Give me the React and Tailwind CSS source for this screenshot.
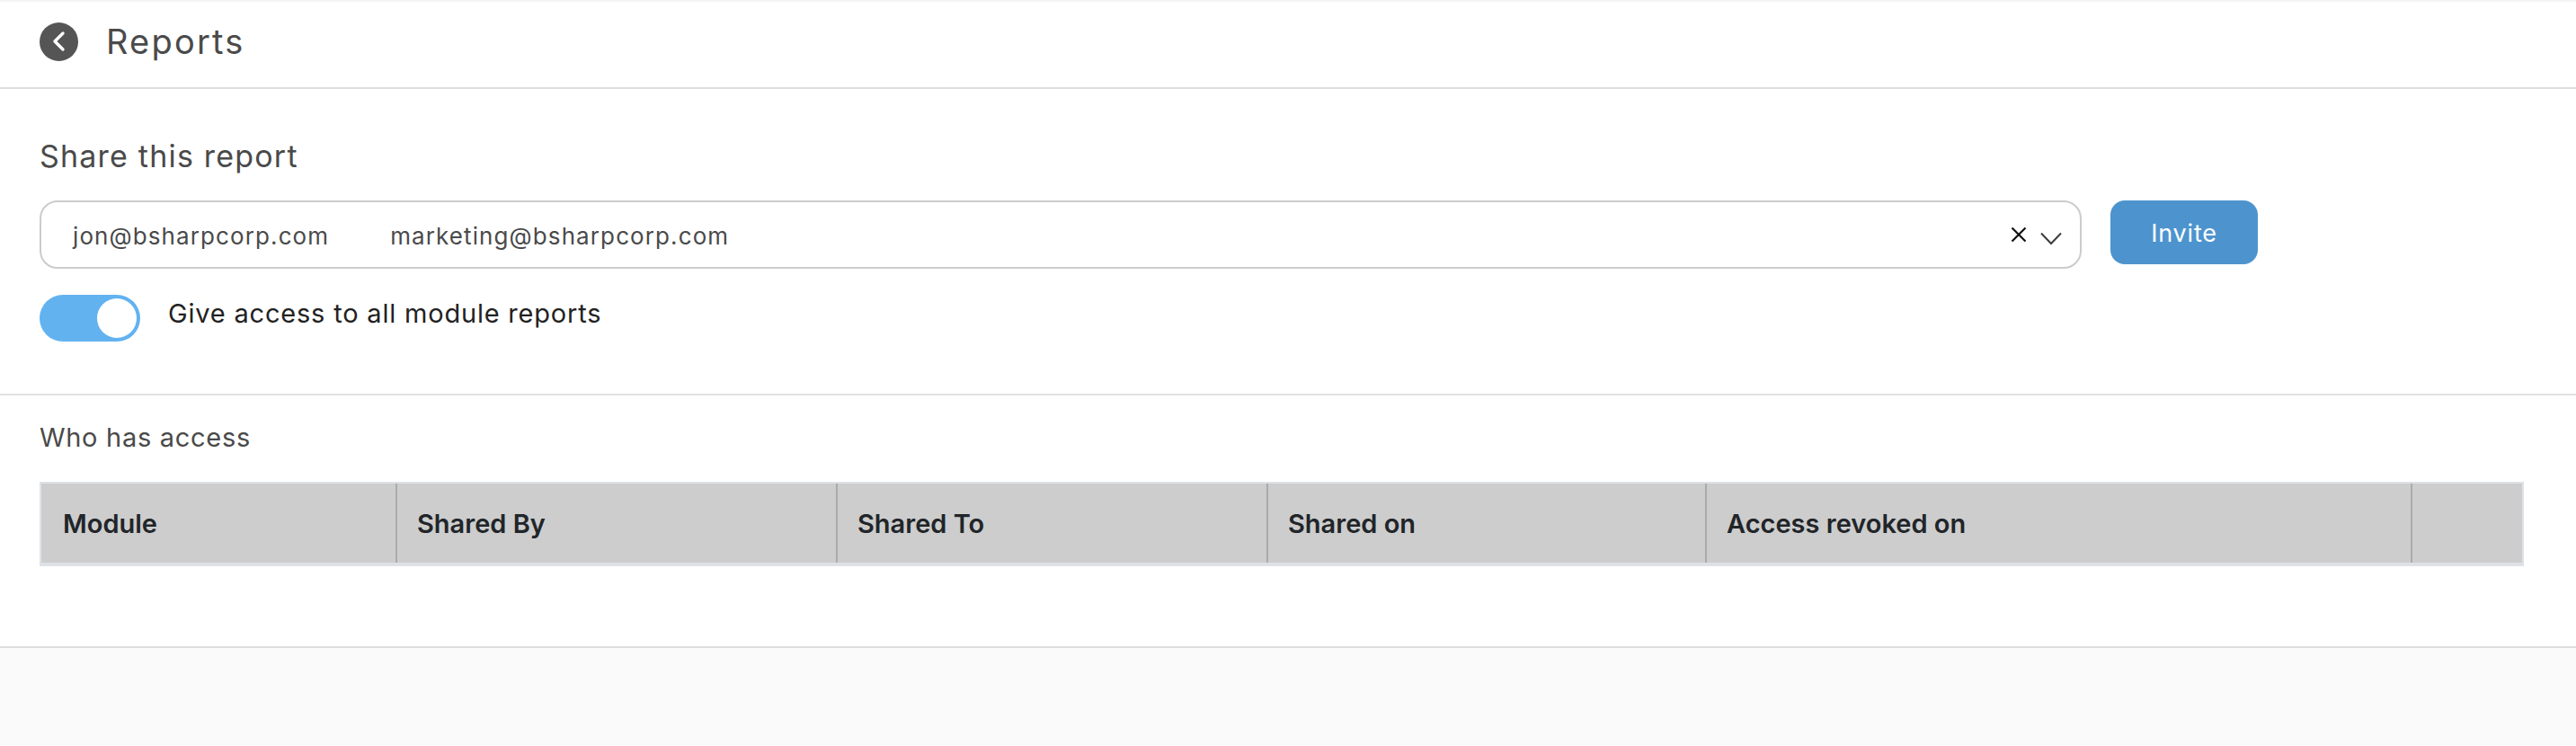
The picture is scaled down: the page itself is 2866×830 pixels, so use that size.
import React from 'react';

const columns = [
  { label: 'Module', width: 'w-[396px] pl-[24px]' },
  { label: 'Shared By', width: 'w-[490px] pl-[22px]' },
  { label: 'Shared To', width: 'w-[479px] pl-[22px]' },
  { label: 'Shared on', width: 'w-[488px] pl-[22px]' },
  { label: 'Access revoked on', width: 'w-[785px] pl-[22px]' },
  { label: '', width: 'flex-1' },
];

const emails = ['jon@bsharpcorp.com', 'marketing@bsharpcorp.com'];

const App = () => {
  return (
    <div className="h-[830px] flex flex-col bg-[#fafafa] font-['Inter','Liberation_Sans',sans-serif] overflow-hidden">
      <header className="h-[99px] shrink-0 bg-white border-t-2 border-t-[#f4f4f4] border-b-2 border-b-[#dedede] pl-[44px] flex items-center gap-[32px] pb-[7px]">
        <button className="w-[43px] h-[43px] rounded-full bg-[#555555] flex items-center justify-center">
          <svg width="22" height="26" viewBox="0 0 22 26" fill="none">
            <path d="M15 4L6 13L15 22" stroke="#fff" strokeWidth="3.4" strokeLinecap="round" strokeLinejoin="round" />
          </svg>
        </button>
        <h1 className="text-[38px] leading-none font-normal tracking-[2.2px] text-[#4a4a4a] -ml-[1px]">Reports</h1>
      </header>

      <section className="h-[341px] shrink-0 bg-white border-b-2 border-b-[#e0e0e0] px-[44px] pt-[55px]">
        <h2 className="text-[34px] leading-[40px] font-normal tracking-[1.2px] text-[#4a4a4a]">Share this report</h2>
        <div className="mt-[29px] flex items-start gap-[32px]">
          <div className="w-[2272px] h-[76px] rounded-[20px] border-2 border-[#cccccc] flex items-center pl-[35px] pr-[20px]">
            <div className="flex-1 flex items-center gap-[68px] text-[26px] tracking-[1.1px] text-[#4a4a4a] mt-[2px]">
              {emails.map((email) => (
                <span key={email}>{email}</span>
              ))}
            </div>
            <svg width="18" height="18" viewBox="0 0 18 18" fill="none" className="mr-[15px] -mt-[1px]">
              <path d="M1.5 1.5L16.5 16.5M16.5 1.5L1.5 16.5" stroke="#111111" strokeWidth="2.2" />
            </svg>
            <svg width="24" height="15" viewBox="0 0 24 15" fill="none" className="mt-[9px]">
              <path d="M1 1.5L12 13L23 1.5" stroke="#3c3c3c" strokeWidth="2" />
            </svg>
          </div>
          <button className="w-[164px] h-[71px] rounded-[16px] bg-[#4d94ce] text-white text-[27px] tracking-[0.8px] pt-[3px]">Invite</button>
        </div>
        <div className="mt-[29px] flex items-start gap-[32px]">
          <div className="w-[112px] h-[52px] rounded-full bg-[#62b2f0] flex items-center justify-end pr-[4px]">
            <span className="w-[44px] h-[44px] rounded-full bg-white" />
          </div>
          <span className="text-[29px] leading-[40px] tracking-[0.8px] text-[#222222] -ml-[1px] mt-[1px]">Give access to all module reports</span>
        </div>
      </section>

      <section className="h-[281px] shrink-0 bg-white border-b-2 border-b-[#dedede] px-[44px] pt-[29px]">
        <h3 className="text-[29px] leading-[36px] font-normal tracking-[0.7px] text-[#4a4a4a]">Who has access</h3>
        <div className="mt-[31px] w-[2764px] h-[94px] flex bg-[#cdcdcd] border-x-2 border-t-2 border-b-4 border-x-[#dee2e6] border-t-[#dee2e6] border-b-[#dee2e6]">
          {columns.map((col, i) => (
            <div
              key={i}
              className={`${col.width} h-full flex items-center pt-[1px] text-[29px] font-semibold text-[#212529] ${i === columns.length - 1 ? '' : 'border-r-2 border-r-[#a9abad]'}`}
            >
              {col.label}
            </div>
          ))}
        </div>
      </section>
    </div>
  );
};

export default App;
